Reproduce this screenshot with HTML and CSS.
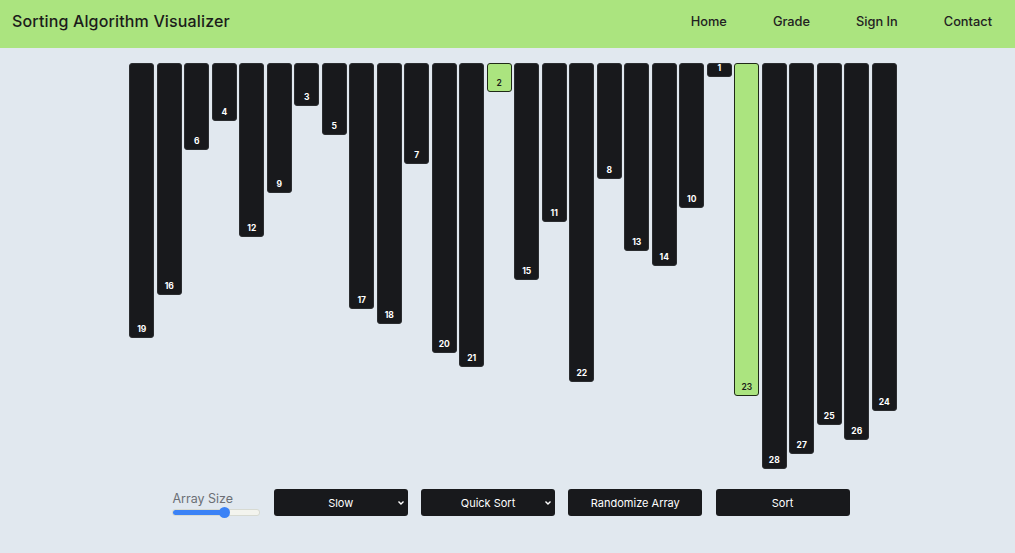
FILE: index.html
```html
<!DOCTYPE html>
<html>
<head>
<meta charset="utf-8">
<link rel="stylesheet" href="styles.css">
</head>
<body>
<header class="topbar">
  <div class="brand">Sorting Algorithm Visualizer</div>
  <nav class="nav">
    <a>Home</a>
    <a>Grade</a>
    <a>Sign In</a>
    <a>Contact</a>
  </nav>
</header>
<main class="main">
  <div class="bars">
    <div class="bar" style="height:275px"><span>19</span></div>
    <div class="bar" style="height:232px"><span>16</span></div>
    <div class="bar" style="height:87px"><span>6</span></div>
    <div class="bar" style="height:58px"><span>4</span></div>
    <div class="bar" style="height:174px"><span>12</span></div>
    <div class="bar" style="height:130px"><span>9</span></div>
    <div class="bar" style="height:43px"><span>3</span></div>
    <div class="bar" style="height:72px"><span>5</span></div>
    <div class="bar" style="height:246px"><span>17</span></div>
    <div class="bar" style="height:261px"><span>18</span></div>
    <div class="bar" style="height:101px"><span>7</span></div>
    <div class="bar" style="height:290px"><span>20</span></div>
    <div class="bar" style="height:304px"><span>21</span></div>
    <div class="bar active" style="height:29px"><span>2</span></div>
    <div class="bar" style="height:217px"><span>15</span></div>
    <div class="bar" style="height:159px"><span>11</span></div>
    <div class="bar" style="height:319px"><span>22</span></div>
    <div class="bar" style="height:116px"><span>8</span></div>
    <div class="bar" style="height:188px"><span>13</span></div>
    <div class="bar" style="height:203px"><span>14</span></div>
    <div class="bar" style="height:145px"><span>10</span></div>
    <div class="bar" style="height:14px"><span>1</span></div>
    <div class="bar active" style="height:333px"><span>23</span></div>
    <div class="bar" style="height:406px"><span>28</span></div>
    <div class="bar" style="height:391px"><span>27</span></div>
    <div class="bar" style="height:362px"><span>25</span></div>
    <div class="bar" style="height:377px"><span>26</span></div>
    <div class="bar" style="height:348px"><span>24</span></div>
  </div>
  <div class="controls">
    <div class="size">
      <div class="size-label">Array Size</div>
      <div class="slider"><div class="fill"></div><div class="thumb"></div></div>
    </div>
    <div class="pick">
      <div class="btn">Slow</div>
      <svg class="chev" width="8" height="6" viewBox="0 0 8 6"><path d="M1.5 1.5 L4 4 L6.5 1.5" fill="none" stroke="#fff" stroke-width="1.4"/></svg>
    </div>
    <div class="pick">
      <div class="btn">Quick Sort</div>
      <svg class="chev" width="8" height="6" viewBox="0 0 8 6"><path d="M1.5 1.5 L4 4 L6.5 1.5" fill="none" stroke="#fff" stroke-width="1.4"/></svg>
    </div>
    <div class="btn">Randomize Array</div>
    <div class="btn">Sort</div>
  </div>
</main>
</body>
</html>
```
FILE: styles.css
```css
html, body {
  margin: 0;
  padding: 0;
}
body {
  background: #e1e8ef;
  font-family: Inter, "Liberation Sans", sans-serif;
  color: #1b1c1a;
  width: 1015px;
  height: 553px;
  overflow: hidden;
}
.topbar {
  height: 48px;
  background: #abe47f;
  display: flex;
  align-items: center;
  justify-content: space-between;
  padding: 0 23px 0 12px;
}
.brand {
  font-size: 16px;
  font-weight: 500;
  letter-spacing: 0.15px;
  padding-bottom: 6px;
}
.nav {
  display: flex;
  gap: 46px;
  padding-bottom: 6px;
}
.nav a {
  font-size: 12.8px;
  font-weight: 500;
  color: #222;
}
.main {
  padding: 15px 0 0 11px;
}
.bars {
  display: flex;
  align-items: flex-start;
  justify-content: center;
  gap: 2.5px;
  height: 411px;
}
.bar {
  width: 25px;
  box-sizing: border-box;
  background: #18191c;
  border: 1px solid #2b2d30;
  border-radius: 3px;
  display: flex;
  flex-direction: column;
  justify-content: flex-end;
  align-items: center;
  color: #fff;
  font-size: 8.5px;
  font-weight: 700;
  padding-bottom: 4px;
  line-height: 1;
}
.bar.active {
  background: #abe47f;
  border-color: #1f2a17;
  color: #1b1c1a;
  font-weight: 600;
}
.controls {
  margin-top: 15px;
  padding-right: 4px;
  display: flex;
  justify-content: center;
  align-items: center;
  gap: 13.3px;
}
.size {
  width: 88px;
  display: flex;
  flex-direction: column;
  gap: 3px;
  padding-top: 4px;
}
.size-label {
  font-size: 12.5px;
  color: #6b6f75;
  line-height: 1;
}
.slider {
  position: relative;
  height: 5px;
  border-radius: 3px;
  background: #f3f4ee;
  border: 1px solid #d7dad2;
}
.fill {
  width: 52px;
  height: 100%;
  background: #3b82f6;
  border-radius: 3px;
}
.thumb {
  position: absolute;
  left: 46px;
  top: -3px;
  width: 11px;
  height: 11px;
  border-radius: 50%;
  background: #3b82f6;
}
.pick {
  position: relative;
}
.btn {
  width: 134px;
  height: 27px;
  box-sizing: border-box;
  background: #18191c;
  border-radius: 3px;
  color: #fff;
  font-size: 11px;
  display: flex;
  align-items: center;
  justify-content: center;
}
.chev {
  position: absolute;
  right: 3px;
  top: 11px;
}
```
